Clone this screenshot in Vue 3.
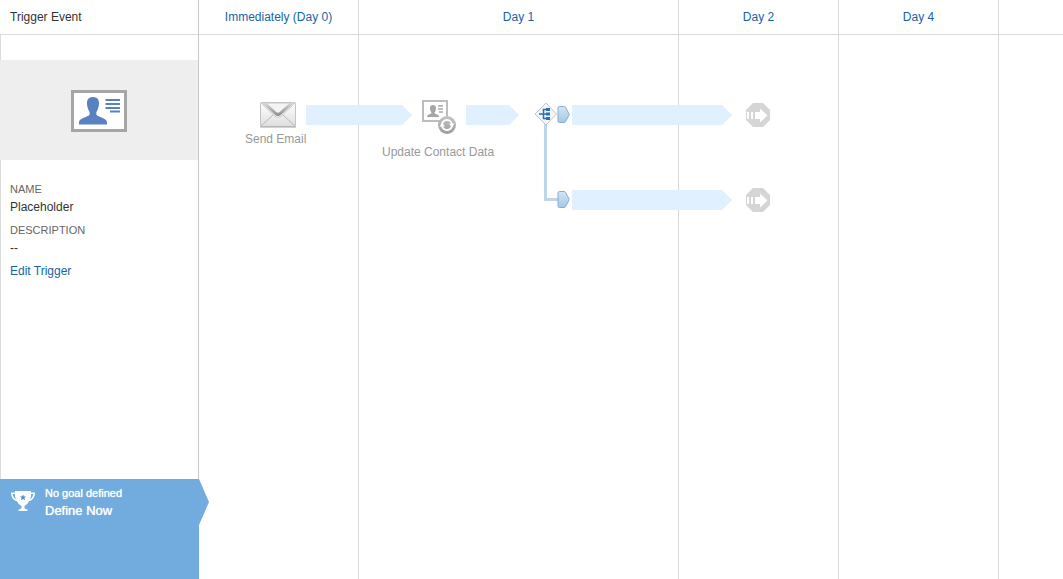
<script setup>
const days = [
  { label: 'Immediately (Day 0)' },
  { label: 'Day 1' },
  { label: 'Day 2' },
  { label: 'Day 4' },
]

const flows = [
  { x: 107, y: 70, w: 106 },
  { x: 267, y: 70, w: 53 },
  { x: 373, y: 70, w: 160 },
  { x: 373, y: 155, w: 160 },
]

const ports = [
  { x: 358, y: 71 },
  { x: 358, y: 156 },
]

const exits = [
  { x: 547, y: 68 },
  { x: 547, y: 153 },
]

const place = (item) => ({ left: item.x + 'px', top: item.y + 'px' })
</script>

<template>
  <div class="planner">
    <aside class="sidebar">
      <h1 class="heading">Trigger Event</h1>
      <div class="panel">
        <div class="hero">
          <svg width="56" height="42" viewBox="0 0 56 42" aria-hidden="true">
            <rect x="1.5" y="1.5" width="53" height="39" fill="#fff" stroke="#a6a6a6" stroke-width="3" />
            <path d="M22 7c-4.200 0-6.200 2.800-6 6.500.1 3.500 1.200 6 2.300 8 .7 1.300.7 3.300-.8 4.300C14.500 27.500 8.500 28.500 8 32v2.500h28V32c-.5-3.500-6.500-4.500-9.500-6.200-1.500-1-1.500-3-.8-4.300 1.100-2 2.200-4.500 2.300-8C28.200 9.800 26.200 7 22 7z" fill="#5781c0" />
            <path d="M34.500 10H49M34.500 14H49M34.500 18H49M39 21.500h10" stroke="#5781c0" stroke-width="2" />
          </svg>
        </div>
        <dl class="details">
          <dt>NAME</dt>
          <dd>Placeholder</dd>
          <dt>DESCRIPTION</dt>
          <dd>--</dd>
        </dl>
        <a class="edit" href="#">Edit Trigger</a>
      </div>
      <section class="goal">
        <svg class="cup" width="24" height="21" viewBox="0 0 24 21" aria-hidden="true">
          <path d="M4 0h16v1.500h4c0 4.500-2.200 8-6 8.800-1 2.300-2.400 3.700-4.500 4.700v2.500c1 .5 2.500.7 3 1.300V20h-9v-1.200c.5-.6 2-.8 3-1.300V15C8.400 14 7 12.600 6 10.300 2.200 9.500 0 6 0 1.500h4z" fill="#fff" />
          <path d="M1.700 3H3.800c0 1.900.4 3.700 1.100 5.400C3.200 7.500 2 5.500 1.700 3zM22.300 3H20.200c0 1.900-.4 3.700-1.100 5.400C20.800 7.500 22 5.500 22.300 3z" fill="#72abde" />
          <path d="M12 3.500l.9 2h2.200l-1.700 1.400.7 2.300-2.100-1.300-2.100 1.300.7-2.300L8.900 5.500h2.200z" fill="#4d8fca" />
        </svg>
        <div class="goal-text">
          <p>No goal defined</p>
          <a href="#">Define Now</a>
        </div>
      </section>
    </aside>

    <main class="timeline">
      <div class="columns">
        <section v-for="(day, i) in days" :key="i" class="day">
          <h2><a href="#">{{ day.label }}</a></h2>
        </section>
        <section class="day rest"><h2></h2></section>
      </div>

      <div class="diagram">
        <svg
          v-for="(flow, i) in flows"
          :key="'f' + i"
          class="node"
          :style="place(flow)"
          :width="flow.w"
          height="20"
          aria-hidden="true"
        >
          <polygon :points="`0,0 ${flow.w - 10},0 ${flow.w},10 ${flow.w - 10},20 0,20`" fill="#e0f0fe" />
        </svg>

        <div class="branch"></div>

        <div class="node email">
          <svg width="36" height="26" viewBox="0 0 36 26" aria-hidden="true">
            <defs>
              <linearGradient id="paper" x1="0" y1="0" x2="0" y2="1">
                <stop offset="0" stop-color="#fff" />
                <stop offset="1" stop-color="#dedede" />
              </linearGradient>
              <linearGradient id="fold" x1="0" y1="0" x2="0" y2="1">
                <stop offset="0" stop-color="#d8d8d8" />
                <stop offset="1" stop-color="#8a8a8a" />
              </linearGradient>
            </defs>
            <rect x="0.5" y="0.5" width="35" height="24" rx="1" fill="url(#paper)" stroke="#c4c4c4" />
            <path d="M1 24L13 13M35 24L23 13" stroke="#b8b8b8" fill="none" />
            <path d="M1 1l14 13.200q3 2.600 6 0L35 1z" fill="#f4f4f4" stroke="#c8c8c8" />
            <path d="M2 1l13 11.700q3 2.600 6 0L34 1h-4.500L20 9.800q-2 1.700-4 0L6.500 1z" fill="url(#fold)" />
            <path d="M0 25h36" stroke="#a8a8a8" stroke-width="1" />
          </svg>
          <span>Send Email</span>
        </div>

        <div class="node contact">
          <svg width="36" height="35" viewBox="0 0 36 35" aria-hidden="true">
            <defs>
              <linearGradient id="grey" x1="0" y1="0" x2="0" y2="1">
                <stop offset="0" stop-color="#c4c4c4" />
                <stop offset="1" stop-color="#9c9c9c" />
              </linearGradient>
            </defs>
            <rect x="1" y="1" width="24" height="20" fill="#fff" stroke="#bdbdbd" stroke-width="2" />
            <path d="M11 5C9 5 8 6.300 8 8c0 2 .5 3 1.200 4 .4.600.2 1.500-.5 1.800C7 14.500 5 14.700 5 17h12c0-2.300-2-2.500-3.700-3.200-.7-.3-.9-1.200-.5-1.800.7-1 1.200-2 1.200-4 0-1.700-1-3-3-3z" fill="#a5a5a5" />
            <path d="M16 6h5M16 9h5M17 12h4" stroke="#bdbdbd" stroke-width="2" />
            <circle cx="25" cy="25" r="9" fill="url(#grey)" />
            <circle cx="25" cy="25" r="5" fill="none" stroke="#fff" stroke-width="2" />
            <path d="M17.500 26.500l2.500-4 3 4zM27 23.500l3 4 2.500-4z" fill="#fff" />
          </svg>
          <span>Update Contact Data</span>
        </div>

        <svg class="node split" width="24" height="24" viewBox="0 0 24 24" aria-hidden="true">
          <path d="M12 1l10.500 11L12 23 1 12z" fill="#f3f5f7" stroke="#c2c7cb" />
          <path d="M5 12h8M13 7.500H9.500v9H13" fill="none" stroke="#2b70ab" stroke-width="1.500" />
          <path d="M12 6h4v3h-4zM12 10.500h4v3h-4zM12 15h4v3h-4z" fill="#2b70ab" />
        </svg>

        <svg
          v-for="(port, i) in ports"
          :key="'p' + i"
          class="node"
          :style="place(port)"
          width="13"
          height="17"
          viewBox="0 0 13 17"
          aria-hidden="true"
        >
          <defs>
            <linearGradient :id="'port' + i" x1="0" y1="0" x2="0" y2="1">
              <stop offset="0" stop-color="#d3e5f6" />
              <stop offset="1" stop-color="#a5c8e8" />
            </linearGradient>
          </defs>
          <path d="M2.500 .5H7q1 0 1.500 .8L12.300 8.500 8.500 15.700q-.5.800-1.500.8H2.500q-1.500 0-1.500-1.500V2Q1 .5 2.500 .5z" :fill="`url(#port${i})`" stroke="#86acd0" />
        </svg>

        <svg
          v-for="(exit, i) in exits"
          :key="'e' + i"
          class="node"
          :style="place(exit)"
          width="24"
          height="24"
          viewBox="0 0 24 24"
          aria-hidden="true"
        >
          <path d="M7 0h10l7 7v10l-7 7H7l-7-7V7z" fill="#d5d5d5" />
          <path d="M1 9h2v7H1zM5 9h2v7H5zM9 9h5V5.500l7.500 7L14 19.500V16H9z" fill="#fff" />
        </svg>
      </div>
    </main>
  </div>
</template>

<style>
body {
  margin: 0;
  background: #fff;
}
</style>

<style scoped>
.planner {
  display: grid;
  grid-template-columns: 199px 1fr;
  min-height: 100vh;
  overflow: hidden;
  font-family: "Liberation Sans", Arial, sans-serif;
  font-size: 12px;
  line-height: 14px;
  color: #333;
}

a {
  color: #1564ab;
  text-decoration: none;
}

.sidebar {
  display: flex;
  flex-direction: column;
}

.heading,
.day h2 {
  box-sizing: border-box;
  height: 35px;
  margin: 0;
  padding-top: 10px;
  border-bottom: 1px solid #d9d9d9;
  font-size: 12px;
  font-weight: normal;
}

.heading {
  padding-left: 10px;
  border-right: 1px solid #c8c8c8;
}

.panel {
  flex: 1;
  padding-top: 25px;
  border-right: 1px solid #c8c8c8;
  box-shadow: inset 1px 0 #dcdcdc;
}

.hero {
  display: flex;
  align-items: center;
  justify-content: center;
  height: 100px;
  padding-top: 2px;
  box-sizing: border-box;
  background: #eee;
}

.details {
  margin: 22px 10px 9px;
}

.details dt {
  font-size: 11px;
  color: #666;
}

.details dd {
  margin: 4px 0 9px;
}

.edit {
  margin-left: 10px;
}

.goal {
  position: relative;
  display: flex;
  gap: 10px;
  box-sizing: border-box;
  min-height: 100px;
  padding: 7px 11px;
  background: #72abde;
  color: #fff;
  text-shadow: 0 0 1px #fff;
}

.goal::after {
  content: "";
  position: absolute;
  z-index: 1;
  top: 0;
  left: 100%;
  width: 10px;
  height: 46px;
  background: #72abde;
  clip-path: polygon(0 0, 100% 50%, 0 100%);
}

.cup {
  margin-top: 5px;
}

.goal p {
  margin: 0 0 4px;
  font-size: 11px;
}

.goal a {
  font-size: 13px;
  color: #fff;
}

.timeline {
  position: relative;
}

.columns {
  display: grid;
  grid-template-columns: 160px 320px 160px 160px 1fr;
  height: 100%;
}

.day {
  border-right: 1px solid #d9d9d9;
  text-align: center;
}

.rest {
  border-right: 0;
}

.diagram {
  position: absolute;
  top: 35px;
  left: 0;
}

.node {
  position: absolute;
}

.email,
.contact {
  display: flex;
  flex-direction: column;
  white-space: nowrap;
  color: #999;
}

.email {
  top: 67px;
  left: 46px;
  gap: 4px;
}

.email svg {
  margin-left: 15px;
}

.contact {
  top: 65px;
  left: 183px;
  gap: 10px;
}

.contact svg {
  margin-left: 40px;
}

.split {
  top: 67px;
  left: 335px;
}

.branch {
  position: absolute;
  top: 88px;
  left: 345px;
  width: 11px;
  height: 75px;
  border-left: 3px solid #bfd5e8;
  border-bottom: 3px solid #bfd5e8;
}
</style>
